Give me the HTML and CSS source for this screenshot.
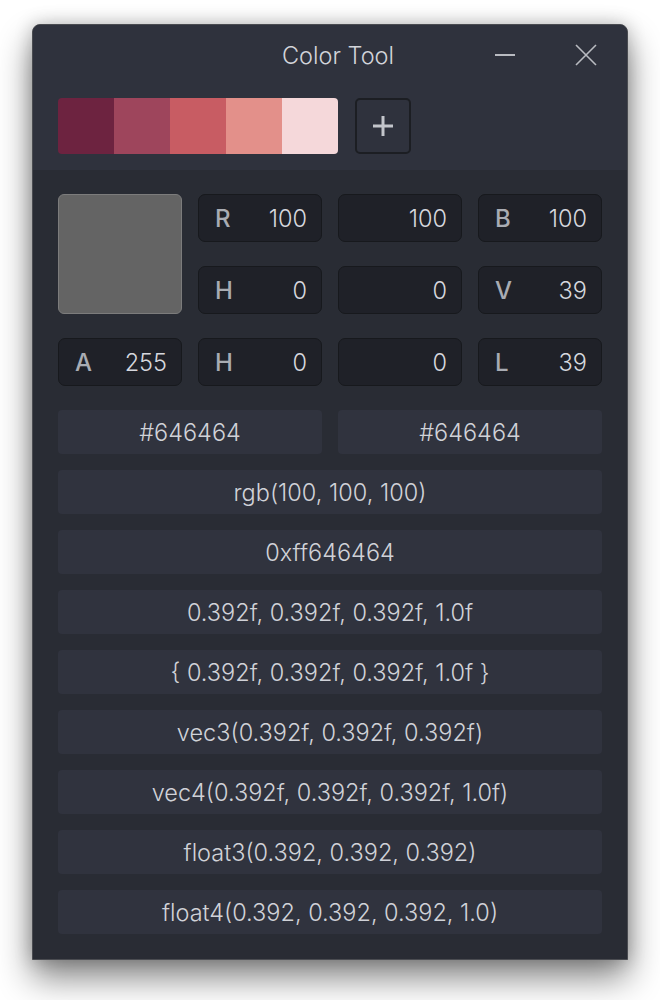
FILE: index.html
```html
<!DOCTYPE html>
<html>
<head>
<meta charset="utf-8">
<link rel="stylesheet" href="styles.css">
</head>
<body>
<div class="window">
  <div class="header">
    <div class="titlebar">
      <div></div>
      <div class="title">Color Tool</div>
      <div class="controls">
        <svg class="ctl" width="20" height="20" viewBox="0 0 20 20"><path d="M0 10H20" stroke="#b9bbc1" stroke-width="2"/></svg>
        <svg class="ctl" width="22" height="22" viewBox="0 0 22 22"><path d="M1 1L21 21M21 1L1 21" stroke="#b9bbc1" stroke-width="1.6"/></svg>
      </div>
    </div>
    <div class="palette">
      <div class="swatches">
        <div class="sw s1"></div>
        <div class="sw s2"></div>
        <div class="sw s3"></div>
        <div class="sw s4"></div>
        <div class="sw s5"></div>
      </div>
      <div class="add">
        <svg width="20" height="20" viewBox="0 0 20 20"><path d="M10 0V20M0 10H20" stroke="#c3c5cb" stroke-width="3"/></svg>
      </div>
    </div>
  </div>
  <div class="panel">
    <div class="fields">
      <div class="preview"></div>
      <div class="field"><span class="lbl">R</span><span class="val">100</span></div>
      <div class="field"><span class="lbl"></span><span class="val">100</span></div>
      <div class="field"><span class="lbl">B</span><span class="val">100</span></div>
      <div class="field"><span class="lbl">H</span><span class="val">0</span></div>
      <div class="field"><span class="lbl"></span><span class="val">0</span></div>
      <div class="field"><span class="lbl">V</span><span class="val">39</span></div>
      <div class="field"><span class="lbl">A</span><span class="val">255</span></div>
      <div class="field"><span class="lbl">H</span><span class="val">0</span></div>
      <div class="field"><span class="lbl"></span><span class="val">0</span></div>
      <div class="field"><span class="lbl">L</span><span class="val">39</span></div>
    </div>
    <div class="rows">
      <div class="pair">
        <div class="row">#646464</div>
        <div class="row">#646464</div>
      </div>
      <div class="row">rgb(100, 100, 100)</div>
      <div class="row">0xff646464</div>
      <div class="row">0.392f, 0.392f, 0.392f, 1.0f</div>
      <div class="row">{ 0.392f, 0.392f, 0.392f, 1.0f }</div>
      <div class="row">vec3(0.392f, 0.392f, 0.392f)</div>
      <div class="row">vec4(0.392f, 0.392f, 0.392f, 1.0f)</div>
      <div class="row">float3(0.392, 0.392, 0.392)</div>
      <div class="row">float4(0.392, 0.392, 0.392, 1.0)</div>
    </div>
  </div>
</div>
</body>
</html>
```
FILE: styles.css
```css
html, body {
  margin: 0;
  padding: 0;
  background: #ffffff;
}
body {
  font-family: Inter, "Noto Sans", sans-serif;
  padding: 24px 0 40px 32px;
}
.window {
  width: 594px;
  border: 1px solid #4a4c51;
  border-radius: 8px 8px 0 0;
  background: #292c34;
  box-shadow: 0 18px 34px rgba(0, 0, 0, 0.48), 0 0 18px rgba(0, 0, 0, 0.22);
  overflow: hidden;
}
.header {
  background: #2f323d;
  padding: 0 25px 16px;
}
.titlebar {
  height: 60px;
  display: grid;
  grid-template-columns: 1fr auto 1fr;
  align-items: center;
}
.title {
  color: #d2d4da;
  font-size: 23.5px;
  font-weight: 300;
  padding: 1px 0 0 16px;
}
.controls {
  display: flex;
  justify-content: flex-end;
  align-items: center;
  gap: 60px;
  padding-right: 5px;
}
.ctl {
  display: block;
}
.palette {
  margin-top: 13px;
  display: flex;
  gap: 17px;
  align-items: center;
}
.swatches {
  display: flex;
  border-radius: 4px;
  overflow: hidden;
}
.sw {
  width: 56px;
  height: 56px;
}
.s1 { background: #6d2340; }
.s2 { background: #9e455c; }
.s3 { background: #c85c63; }
.s4 { background: #e3908a; }
.s5 { background: #f5d8da; }
.add {
  width: 52px;
  height: 52px;
  border: 2px solid #1c1e23;
  border-radius: 5px;
  display: flex;
  align-items: center;
  justify-content: center;
}
.add svg { display: block; }
.panel {
  padding: 24px 25px 25px;
}
.fields {
  display: grid;
  grid-template-columns: repeat(4, 124px);
  grid-auto-rows: 48px;
  gap: 24px 16px;
}
.preview {
  grid-row: 1 / 3;
  background: #646464;
  border: 1px solid #7c7c7c;
  border-radius: 6px;
}
.field {
  background: #1f2128;
  border: 1px solid #17191d;
  border-radius: 7px;
  display: flex;
  align-items: center;
  justify-content: space-between;
  padding: 0 14px 0 16px;
}
.lbl {
  color: #a9acb3;
  font-size: 24px;
  font-weight: 500;
}
.val {
  color: #d6d8de;
  font-size: 23.5px;
  font-weight: 300;
}
.rows {
  margin-top: 24px;
  display: flex;
  flex-direction: column;
  gap: 16px;
}
.pair {
  display: grid;
  grid-template-columns: 1fr 1fr;
  gap: 16px;
}
.row {
  height: 44px;
  background: #30333e;
  border-radius: 4px;
  display: flex;
  align-items: center;
  justify-content: center;
  color: #d0d2d8;
  font-size: 23.5px;
  font-weight: 300;
}
```
